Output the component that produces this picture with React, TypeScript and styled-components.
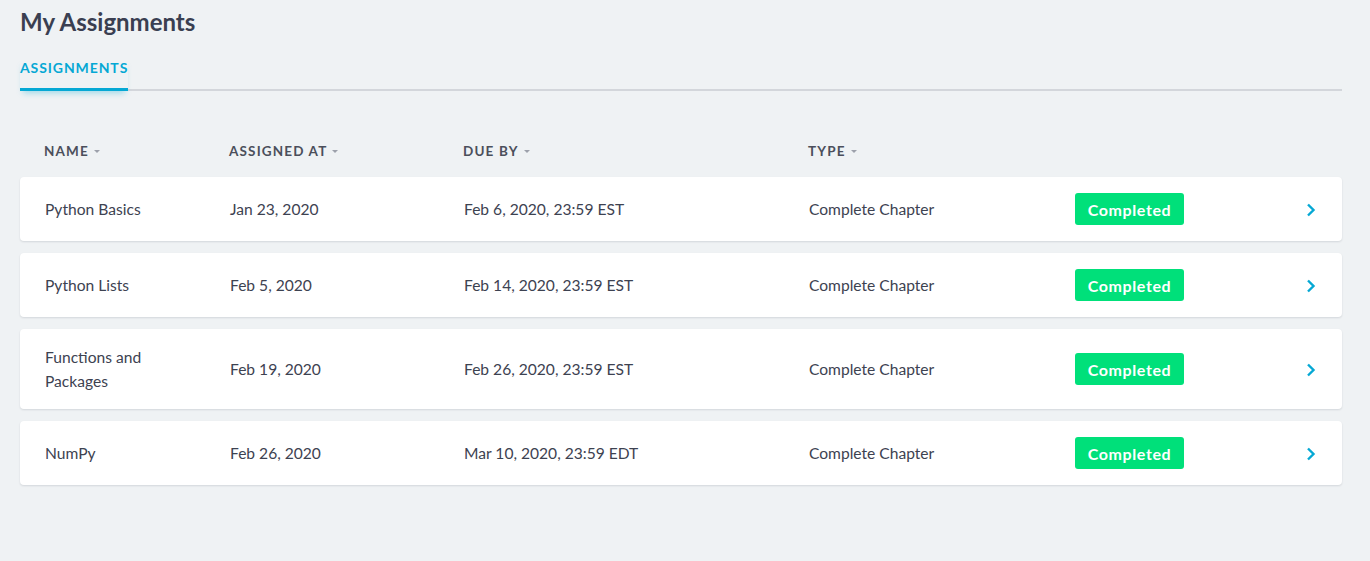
import React from "react";
import styled, { createGlobalStyle } from "styled-components";

const Global = createGlobalStyle`
  html, body { margin: 0; padding: 0; background: #eff2f4; }
  body { font-family: Lato, "Open Sans", sans-serif; color: #3d4251; }
`;

const Page = styled.div`
  padding: 8px 28px 40px 20px;
`;

const Title = styled.h1`
  margin: 0;
  font-size: 24px;
  line-height: 28px;
  font-weight: 700;
  color: #3a3f51;
`;

const TabBar = styled.div`
  display: flex;
  margin-top: 22px;
  border-bottom: 2px solid #d3d6db;
`;

const Tab = styled.div<{ $active?: boolean }>`
  font-size: 14px;
  line-height: 20px;
  font-weight: 700;
  letter-spacing: 0.9px;
  color: ${(p) => (p.$active ? "#05a8d4" : "#6b7080")};
  padding-bottom: 10px;
  margin-bottom: -2px;
  border-bottom: 3px solid ${(p) => (p.$active ? "#05a8d4" : "transparent")};
  box-shadow: ${(p) => (p.$active ? "0 5px 6px -3px rgba(5,168,212,0.35)" : "none")};
`;

const cols = "185px 234px 345px 266px 1fr 20px";

const HeaderRow = styled.div`
  display: grid;
  grid-template-columns: ${cols};
  padding: 0 26px 0 24px;
  margin-top: 50px;
  margin-bottom: 16px;
  height: 20px;
  align-items: center;
`;

const HeaderCell = styled.div`
  font-size: 13.5px;
  font-weight: 700;
  letter-spacing: 1.15px;
  color: #4b4f5b;
  text-transform: uppercase;
  display: flex;
  align-items: center;
  gap: 5px;
`;

const SortCaret = styled.span`
  width: 0;
  height: 0;
  border-left: 3.5px solid transparent;
  border-right: 3.5px solid transparent;
  border-top: 3.5px solid #9da1ab;
  margin-top: 1px;
`;

const List = styled.div`
  display: flex;
  flex-direction: column;
  gap: 12px;
`;

const Row = styled.div<{ $tall?: boolean }>`
  display: grid;
  grid-template-columns: ${cols};
  align-items: center;
  height: ${(p) => (p.$tall ? 80 : 64)}px;
  padding: 0 26px 0 25px;
  background: #ffffff;
  border-radius: 4px;
  box-shadow: 0 1px 2px rgba(40, 50, 70, 0.14);
  box-sizing: border-box;
`;

const Cell = styled.div`
  font-size: 15.6px;
  line-height: 24px;
  color: #3d4251;
  padding-right: 20px;
`;

const NameCell = styled(Cell)`
  padding-right: 60px;
`;

const Badge = styled.span`
  display: inline-flex;
  align-items: center;
  justify-content: center;
  width: 109px;
  height: 32px;
  background: #00e07a;
  border-radius: 3px;
  color: #ffffff;
  font-size: 16px;
  font-weight: 700;
  letter-spacing: 0.6px;
`;

const Chevron = styled.svg`
  width: 10px;
  height: 14px;
  justify-self: end;
  margin-top: 2px;
`;

const rows = [
  { name: "Python Basics", assigned: "Jan 23, 2020", due: "Feb 6, 2020, 23:59 EST" },
  { name: "Python Lists", assigned: "Feb 5, 2020", due: "Feb 14, 2020, 23:59 EST" },
  { name: "Functions and Packages", assigned: "Feb 19, 2020", due: "Feb 26, 2020, 23:59 EST", tall: true },
  { name: "NumPy", assigned: "Feb 26, 2020", due: "Mar 10, 2020, 23:59 EDT" },
];

export default function App() {
  return (
    <>
      <Global />
      <Page>
        <Title>My Assignments</Title>
        <TabBar>
          <Tab $active>ASSIGNMENTS</Tab>
        </TabBar>
        <HeaderRow>
          {["Name", "Assigned at", "Due by", "Type"].map((h) => (
            <HeaderCell key={h}>
              {h}
              <SortCaret />
            </HeaderCell>
          ))}
          <div />
          <div />
        </HeaderRow>
        <List>
          {rows.map((r) => (
            <Row key={r.name} $tall={r.tall}>
              <NameCell>{r.name}</NameCell>
              <Cell>{r.assigned}</Cell>
              <Cell>{r.due}</Cell>
              <Cell>Complete Chapter</Cell>
              <div>
                <Badge>Completed</Badge>
              </div>
              <Chevron viewBox="0 0 10 14">
                <path d="M2 1.5 L7.5 7 L2 12.5" fill="none" stroke="#05a8d4" strokeWidth="2.4" />
              </Chevron>
            </Row>
          ))}
        </List>
      </Page>
    </>
  );
}
